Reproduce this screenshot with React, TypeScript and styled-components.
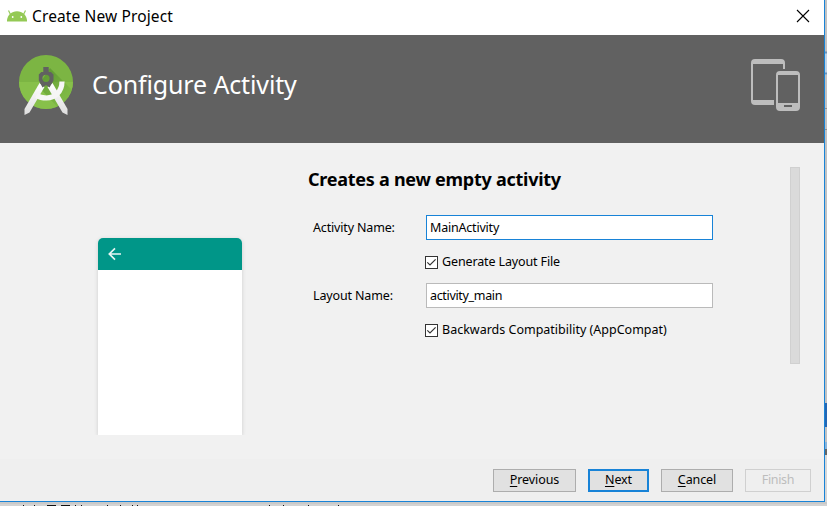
import React from "react";
import styled, { createGlobalStyle } from "styled-components";

const GlobalStyle = createGlobalStyle`
  *, *::before, *::after { box-sizing: border-box; }
  body { margin: 0; overflow: hidden; }
`;

const Desktop = styled.div`
  display: grid;
  grid-template-columns: 825px 2px;
  grid-template-rows: 502px 4px;
  width: 827px;
  height: 506px;
  background: #d3d3d3;
  font-family: "Noto Sans", "Open Sans", sans-serif;
  color: #000;
`;

const Dialog = styled.main`
  display: flex;
  flex-direction: column;
  border: solid #1883d7;
  border-width: 0 1px 1px 0;
  background: #f1f1f1;
`;

const Backdrop = styled.svg`
  display: block;
`;

const BottomEdge = styled(Backdrop)`
  grid-column: 1 / -1;
`;

const TitleBar = styled.header`
  display: flex;
  align-items: center;
  height: 35px;
  padding: 0 14px 3px 7px;
  background: #fff;
`;

const Title = styled.span`
  flex: 1;
  margin-left: 5px;
  font-size: 15.5px;
  line-height: 20px;
  letter-spacing: 0.12px;
`;

const CloseButton = styled.button`
  display: flex;
  padding: 0;
  border: 0;
  background: none;
`;

const Banner = styled.section`
  display: flex;
  align-items: center;
  height: 108px;
  padding: 0 23px 0 18px;
  background: #616161;
`;

const BannerTitle = styled.h1`
  flex: 1;
  margin: 0 0 10px 18px;
  font-size: 25px;
  font-weight: 400;
  line-height: 34px;
  letter-spacing: -0.13px;
  color: #fff;
`;

const Logo = styled.svg`
  margin-bottom: 8px;
`;

const Devices = styled.svg`
  margin-bottom: 8px;
`;

const Content = styled.section`
  display: grid;
  grid-template-columns: 144px 405px 10px;
  column-gap: 66px;
  height: 316px;
  padding: 24px 0 0 98px;
`;

const Preview = styled.div`
  height: 197px;
  margin-top: 71px;
  overflow: hidden;
  border-radius: 5px 5px 0 0;
  background: #fff;
`;

const PreviewFrame = styled.div`
  width: 144px;
  height: 268px;
  margin: 0 -4px;
  padding: 0 4px;
  box-sizing: content-box;
  overflow: hidden;

  ${Preview} {
    box-shadow: 0 1px 4px rgba(0, 0, 0, 0.15);
  }
`;

const PreviewBar = styled.div`
  display: flex;
  align-items: center;
  height: 32px;
  padding-left: 10px;
  background: #009688;
`;

const Form = styled.form`
  width: 405px;
`;

const Heading = styled.h2`
  margin: 0 0 23px;
  font-size: 18px;
  line-height: 25px;
  letter-spacing: -0.26px;
`;

const Fields = styled.div`
  display: grid;
  grid-template-columns: 113px 287px;
  grid-template-rows: 26px 42px 26px 42px;
  align-items: center;
  padding-left: 5px;
  font-size: 12.5px;
`;

const Label = styled.label<{ $tracking: number }>`
  margin-bottom: 1px;
  line-height: 18px;
  letter-spacing: ${(p) => p.$tracking}px;
`;

const Input = styled.input<{ $active?: boolean; $tracking: number }>`
  width: 287px;
  height: 25px;
  margin: 0 0 1px;
  padding: 0 3px;
  border: 1px solid ${(p) => (p.$active ? "#1883d7" : "#bababa")};
  border-radius: 0;
  outline: 0;
  background: #fff;
  font: inherit;
  letter-spacing: ${(p) => p.$tracking}px;
  color: #000;
`;

const CheckRow = styled.label<{ $tracking: number }>`
  grid-column: 2;
  display: flex;
  align-items: center;
  margin-left: -1px;
  gap: 4px;
  line-height: 18px;
  white-space: nowrap;
  letter-spacing: ${(p) => p.$tracking}px;
`;

const CheckText = styled.span`
  margin-bottom: 1px;
`;

const ScrollThumb = styled.div`
  width: 10px;
  height: 197px;
  margin-left: 11px;
  border: 1px solid #d0d0d0;
  background: #dadada;
`;

const Footer = styled.footer`
  display: flex;
  flex: 1;
  justify-content: flex-end;
  gap: 12px;
  padding: 10px 13px 0 0;
  background: #efefef;
`;

const Button = styled.button<{ $width: number; $primary?: boolean; $tracking: number }>`
  width: ${(p) => p.$width}px;
  height: 23px;
  padding: 0 0 2px;
  border: ${(p) => (p.$primary ? "2px solid #1883d7" : "1px solid #adadad")};
  background: #e1e1e1;
  font: inherit;
  font-size: 12.5px;
  line-height: 18px;
  letter-spacing: ${(p) => p.$tracking}px;
  color: #000;

  &:disabled {
    border-color: #d0d0d0;
    background: #efefef;
    color: #bdbdbd;
  }
`;

const Mnemonic = styled.span`
  text-decoration: underline;
  text-decoration-thickness: 1px;
  text-underline-offset: 2px;
`;

const AndroidHead = () => (
  <svg width="20" height="12" viewBox="0 0 20 12">
    <path d="M3.500 4.500L1.500 .5M16.500 4.500L18.500 .5" fill="none" stroke="#97cb5c" strokeWidth="1.200" />
    <path d="M0 11.500V10C.7 4.800 4.500 1.200 10 1.200S19.300 4.800 20 10V11.500Z" fill="#94c955" />
    <circle cx="5.700" cy="7" r=".9" fill="#fff" />
    <circle cx="14.300" cy="7" r=".9" fill="#fff" />
  </svg>
);

const StudioLogo = () => (
  <Logo width="56" height="62" viewBox="18 54 56 62">
    <defs>
      <clipPath id="disc">
        <circle cx="46" cy="82" r="27" />
      </clipPath>
      <linearGradient id="leg" x2="0" y2="1">
        <stop offset="0" stopColor="#fff" />
        <stop offset="1" stopColor="#dedede" />
      </linearGradient>
      <linearGradient id="shade" gradientUnits="userSpaceOnUse" x1="48" y1="76" x2="72" y2="100">
        <stop offset="0" stopColor="#4f8a2a" stopOpacity=".55" />
        <stop offset="1" stopColor="#6fae3a" stopOpacity=".25" />
      </linearGradient>
    </defs>
    <circle cx="46" cy="82" r="27" fill="#7cb543" />
    <g clipPath="url(#disc)">
      <path d="M18 82H74V110H18Z" fill="#87c04a" />
      <path d="M50 68L76 94V112H62L38 86Z" fill="url(#shade)" />
    </g>
    <path d="M39.500 83L44.500 87L29.500 112.500L24.500 115V109Z" fill="url(#leg)" />
    <path d="M52.500 83L47.500 87L62.500 112.500L67.500 115V109Z" fill="url(#leg)" />
    <path d="M62 81.500C62 92 54.500 98 46.500 98C42.500 98 39 97 36.500 95.500" fill="none" stroke="#f6f6f6" strokeWidth="5.200" />
    <path fillRule="evenodd" d="M43.300 67H48.700V72H51L53.500 74.500V80.500L49.500 87.500L46 85L42.500 87.500L38.800 80.500V74.500L41.300 72H43.300ZM46 74.700A3.600 3.600 0 1 0 46 81.900A3.600 3.600 0 1 0 46 74.700Z" fill="#616161" />
  </Logo>
);

const DevicesIcon = () => (
  <Devices width="50" height="53" viewBox="751 59 50 53">
    <path fillRule="evenodd" fill="#bdbdbd" d="M755 59H781Q785 59 785 63V69H783V64H753V100H774V105H755Q751 105 751 101V63Q751 59 755 59Z" />
    <path fillRule="evenodd" fill="#bdbdbd" d="M780 71H796Q800 71 800 75V107Q800 111 796 111H780Q776 111 776 107V75Q776 71 780 71ZM778 75V103H798V75ZM784 105V107H792V105Z" />
  </Devices>
);

const CheckBox = () => (
  <svg width="13" height="13" viewBox="0 0 13 13">
    <rect x=".5" y=".5" width="12" height="12" fill="#fff" stroke="#333" />
    <path d="M2.300 6.300L5 9L10.600 3.400" fill="none" stroke="#333" strokeWidth="1.200" />
  </svg>
);

const textMarks = [
  [23, 1], [34, 1], [47, 9], [61, 9], [75, 1], [81, 1], [107, 1], [120, 1],
  [132, 1], [137, 1], [269, 1], [283, 1], [308, 1], [338, 1],
];

const buttons = [
  { text: "Previous", width: 83, tracking: -0.1 },
  { text: "Next", width: 61, tracking: -0.1, primary: true },
  { text: "Cancel", width: 72, tracking: -0.1 },
];

export default function App() {
  return (
    <>
      <GlobalStyle />
      <Desktop>
        <Dialog>
          <TitleBar>
            <AndroidHead />
            <Title>Create New Project</Title>
            <CloseButton aria-label="Close">
              <svg width="14" height="14" viewBox="0 0 14 14">
                <path d="M1 1L13 13M13 1L1 13" stroke="#000" strokeWidth="1.100" />
              </svg>
            </CloseButton>
          </TitleBar>
          <Banner>
            <StudioLogo />
            <BannerTitle>Configure Activity</BannerTitle>
            <DevicesIcon />
          </Banner>
          <Content>
            <PreviewFrame>
              <Preview>
                <PreviewBar>
                  <svg width="14" height="14" viewBox="0 0 14 14">
                    <path d="M13 7H1.500M7 1.300L1.300 7L7 12.700" fill="none" stroke="#e8f5f3" strokeWidth="1.700" />
                  </svg>
                </PreviewBar>
              </Preview>
            </PreviewFrame>
            <Form>
              <Heading>Creates a new empty activity</Heading>
              <Fields>
                <Label htmlFor="activity" $tracking={-0.16}>Activity Name:</Label>
                <Input id="activity" $active $tracking={-0.2} defaultValue="MainActivity" />
                <CheckRow $tracking={-0.13}><CheckBox /><CheckText>Generate Layout File</CheckText></CheckRow>
                <Label htmlFor="layout" $tracking={-0.14}>Layout Name:</Label>
                <Input id="layout" $tracking={-0.33} defaultValue="activity_main" />
                <CheckRow $tracking={0}><CheckBox /><CheckText>Backwards Compatibility (AppCompat)</CheckText></CheckRow>
              </Fields>
            </Form>
            <ScrollThumb />
          </Content>
          <Footer>
            {buttons.map((b) => (
              <Button key={b.text} $width={b.width} $primary={b.primary} $tracking={b.tracking}>
                <Mnemonic>{b.text[0]}</Mnemonic>{b.text.slice(1)}
              </Button>
            ))}
            <Button $width={66} $tracking={-0.35} disabled>Finish</Button>
          </Footer>
        </Dialog>
        <Backdrop width="2" height="502">
          <rect width="2" height="502" fill="#c2c2c2" />
          <rect y="52" width="2" height="23" fill="#bfd3e6" />
          <path d="M0 52.500H2M0 73.500H2" stroke="#6d93b8" strokeWidth="2" />
          <path d="M0 108.500H2M0 129.500H2" stroke="#929292" />
          <rect y="403" width="2" height="24" fill="#2467b4" />
          <rect y="442" width="2" height="7" fill="#8db5d9" />
          <rect y="449" width="2" height="6" fill="#666" />
          <rect y="455" width="2" height="47" fill="#d7d7d7" />
        </Backdrop>
        <BottomEdge width="827" height="4">
          <rect width="827" height="4" fill="#c9c9c9" />
          <rect y="2" width="827" height="2" fill="#d3d3d3" />
          {textMarks.map(([x, w]) => (
            <rect key={x} x={x} y="3" width={w} height="1" fill="#111" />
          ))}
        </BottomEdge>
      </Desktop>
    </>
  );
}
